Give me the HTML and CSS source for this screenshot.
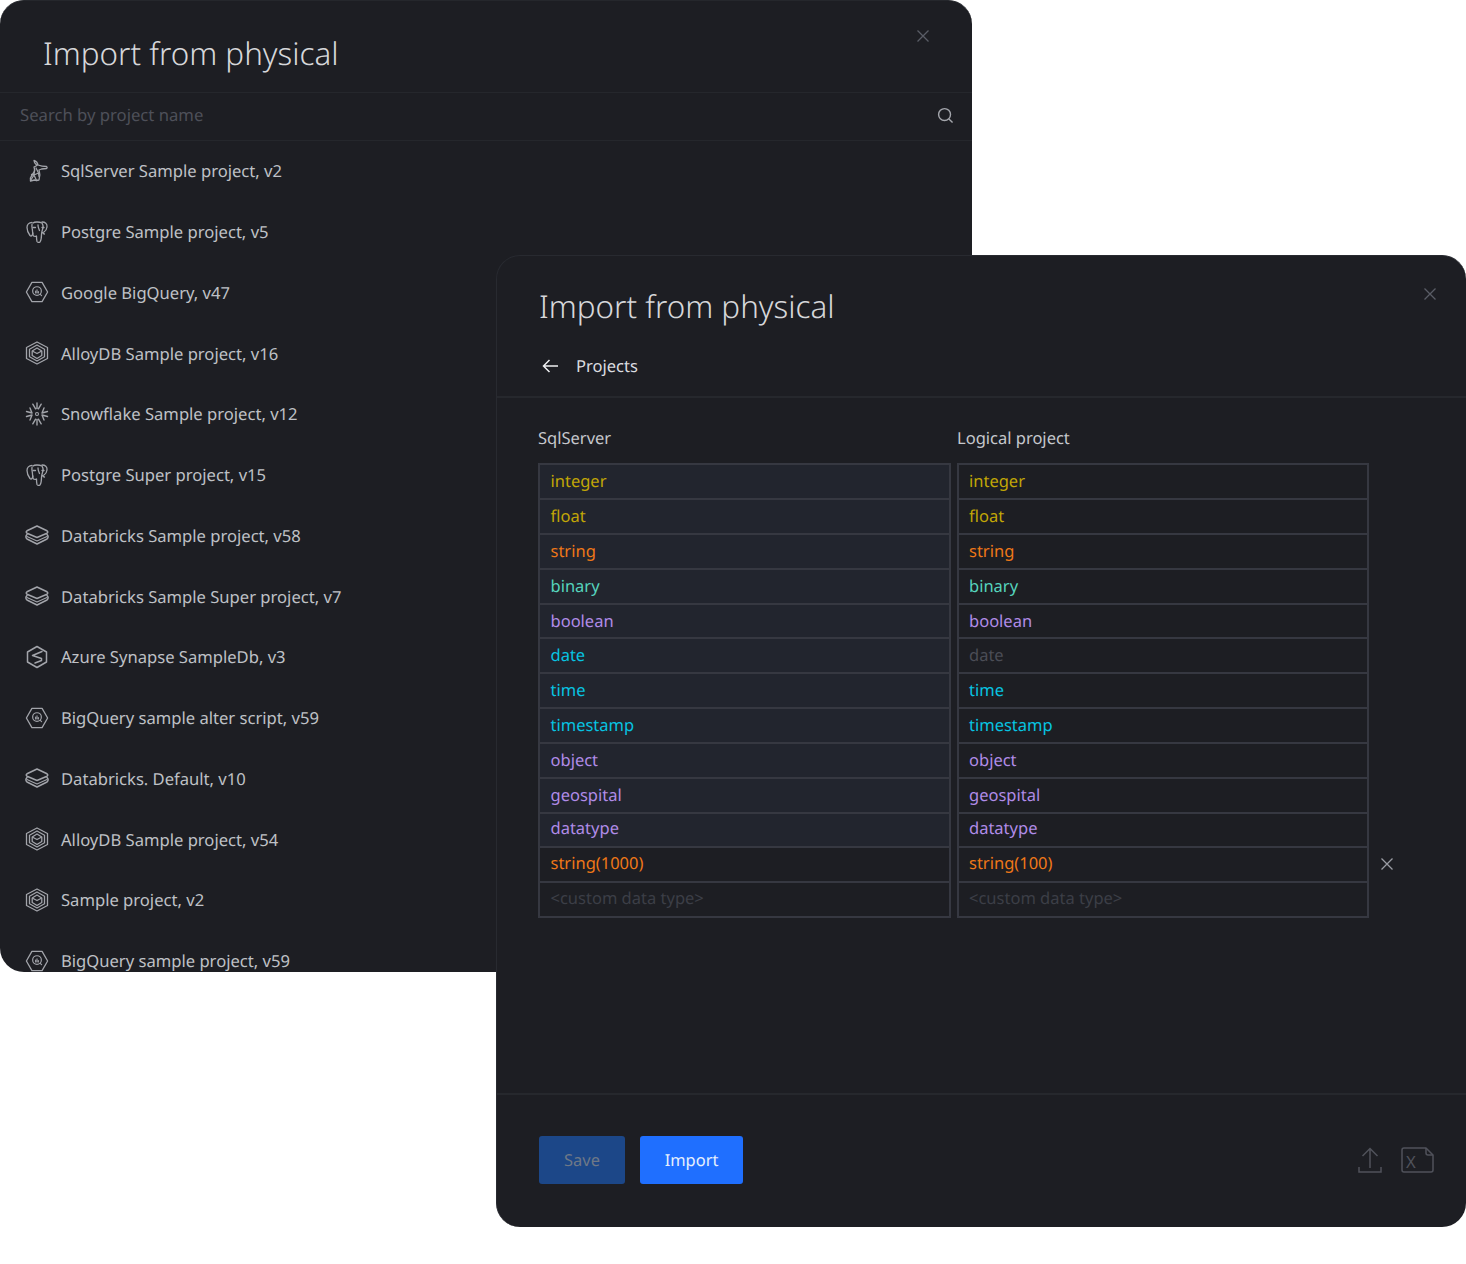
FILE: index.html
```html
<!DOCTYPE html>
<html lang="en">
<head>
<meta charset="utf-8">
<title>Import from physical</title>
<link rel="stylesheet" href="styles.css">
</head>
<body>
<svg class="defs" aria-hidden="true">
  <symbol id="i-sql" viewBox="0 0 24 24"><g fill="none" stroke="currentColor" stroke-width="1.300" stroke-linejoin="round" stroke-linecap="round"><path d="M9 1.500c2 .5 3.500 2 4 4.500 2.500 1 5 1.500 8.500 1.500.8.500.8 1.500 0 2l-5 .5-2.500 1c.5 2.500 1.500 5 .5 7l-.5 3-2.500.5-2-.5-4 1c-.5-2 0-4 1.500-6l2.500-3.500c.5-1.500 0-3-.5-4.500l3-1.500C11 5.500 9 4 9 1.500Z"/><path d="M11 9l2.500 5-4.500 2 2.500 5.500M6.500 15.500 9 16l-3.500 5.500M9.500 10.500l-.5 5.500M13.500 14l.5 3.500"/></g></symbol>
  <symbol id="i-pg" viewBox="0 0 24 24"><g fill="none" stroke="currentColor" stroke-width="1.300" stroke-linejoin="round" stroke-linecap="round"><path d="M7 2.500C4 2.500 2 4.500 2 7.500c0 3 1.500 6 3 8 1 1 2 .5 2.500-1l.5-1.500"/><path d="M17 2c3 0 5.500 1.500 5 5-.3 2.500-1.500 4-3 5l-1.500.5c.5 1 1 1.500 2 1.500"/><path d="M8 3c1-1 2.500-1 4-1s3 0 5 1c1 1.500 1.500 4 .5 6.500-.5 1.500-1 3-1 5 0 3-.5 6-1.500 7.500-1 .8-2.500.5-3-.5-.5-1.500-.5-3.500-.5-5.500-1 .5-2 .5-3 0-1-1-1-3-1-5 0-2-1-4-.5-6.500"/><path d="M13 5c0 3 1 4 1.500 5.500M8 7.500h2.500M17 7.500h2"/></g></symbol>
  <symbol id="i-bq" viewBox="0 0 26 24"><g fill="none" stroke="currentColor" stroke-linejoin="round" stroke-linecap="round"><path stroke-width="1.400" d="M7.500 1.500h11L24.500 12l-6 10.500h-11L1.500 12Z"/><circle cx="13" cy="11" r="4.700" stroke-width="1.300"/><path stroke-width="1.200" d="M16.500 14.500l1.500 1.500M11.500 13v-2M13 13V9.500M14.500 13v-1.500"/></g></symbol>
  <symbol id="i-alloy" viewBox="0 0 24 24"><g fill="none" stroke="currentColor" stroke-width="1.300" stroke-linejoin="round"><path d="M12 1 22.500 6.500v11L12 23 1.500 17.500v-11Z"/><path d="M12 4 19.500 8.200v7.600L12 20 4.500 15.800V8.200Z"/><path d="M12 7 16.800 10v4.500L12 17.500 7.200 14.500V10Z"/><path d="M7.200 10 12 12.500 16.800 10"/></g></symbol>
  <symbol id="i-snow" viewBox="0 0 24 24"><g fill="none" stroke="currentColor" stroke-width="1.400" stroke-linecap="round" stroke-linejoin="round"><path d="M12 1V6.500M7.800 2.200 10.600 6.800M16.200 2.200 13.400 6.800"/><path d="M1.500 9.500 7 11 5 6M22.500 9.500 17 11 19 6M1.500 14.500 7 13 5 18M22.500 14.500 17 13 19 18"/><path d="M12 23V17.500M7.800 21.800 10.600 17.200M16.200 21.800 13.400 17.200"/><circle cx="12" cy="12" r="1.500" stroke-width="1.100"/></g></symbol>
  <symbol id="i-brick" viewBox="0 0 24 20"><g fill="none" stroke="currentColor" stroke-width="1.500" stroke-linejoin="round" stroke-linecap="round"><path d="M12 1 22 5.800c1 .7 1 1.700 0 2.400L12 12.500 2 8.200c-1-.7-1-1.700 0-2.400Z"/><path d="M2 9.500C.5 11 .5 12.500 2 14L12 19l10-5c1.500-1.500 1.500-3 0-4.500"/><path d="M2 11.500 12 16l10-4.500" stroke-width="1.100"/></g></symbol>
  <symbol id="i-syn" viewBox="0 0 24 24"><g fill="none" stroke="currentColor" stroke-width="1.500" stroke-linejoin="round" stroke-linecap="round"><path d="M12 1.500 21.500 7v10L12 22.500 2.500 17V7Z"/><path d="M17 6.500 7.500 10.500 16.500 13.500 16.500 15.500 10 18"/></g></symbol>
  <symbol id="i-close" viewBox="0 0 14 14"><path fill="none" stroke="currentColor" stroke-width="1.300" d="M1.500 1.500l11 11M12.500 1.500l-11 11"/></symbol>
</svg>

<main class="stage">
  <section class="window window-back">
    <header class="back-head">
      <h1 class="title">Import from physical</h1>
      <svg class="close close-back"><use href="#i-close"/></svg>
    </header>
    <div class="search">
      <span class="search-ph">Search by project name</span>
      <svg class="search-icon" viewBox="0 0 18 18"><circle cx="8" cy="8" r="6.300" fill="none" stroke="currentColor" stroke-width="1.500"/><path d="M12.600 12.600 16.500 16.500" fill="none" stroke="currentColor" stroke-width="1.500"/></svg>
    </div>
    <ul class="projects">
      <li class="project"><svg class="picon"><use href="#i-sql"/></svg><span>SqlServer Sample project, v2</span></li>
      <li class="project"><svg class="picon"><use href="#i-pg"/></svg><span>Postgre Sample project, v5</span></li>
      <li class="project"><svg class="picon"><use href="#i-bq"/></svg><span>Google BigQuery, v47</span></li>
      <li class="project"><svg class="picon"><use href="#i-alloy"/></svg><span>AlloyDB Sample project, v16</span></li>
      <li class="project"><svg class="picon"><use href="#i-snow"/></svg><span>Snowflake Sample project, v12</span></li>
      <li class="project"><svg class="picon"><use href="#i-pg"/></svg><span>Postgre Super project, v15</span></li>
      <li class="project"><svg class="picon"><use href="#i-brick"/></svg><span>Databricks Sample project, v58</span></li>
      <li class="project"><svg class="picon"><use href="#i-brick"/></svg><span>Databricks Sample Super project, v7</span></li>
      <li class="project"><svg class="picon"><use href="#i-syn"/></svg><span>Azure Synapse SampleDb, v3</span></li>
      <li class="project"><svg class="picon"><use href="#i-bq"/></svg><span>BigQuery sample alter script, v59</span></li>
      <li class="project"><svg class="picon"><use href="#i-brick"/></svg><span>Databricks. Default, v10</span></li>
      <li class="project"><svg class="picon"><use href="#i-alloy"/></svg><span>AlloyDB Sample project, v54</span></li>
      <li class="project"><svg class="picon"><use href="#i-alloy"/></svg><span>Sample project, v2</span></li>
      <li class="project"><svg class="picon"><use href="#i-bq"/></svg><span>BigQuery sample project, v59</span></li>
    </ul>
  </section>

  <section class="window window-front">
    <header class="front-head">
      <h1 class="title">Import from physical</h1>
      <svg class="close close-front"><use href="#i-close"/></svg>
      <div class="crumb">
        <svg class="arrow" viewBox="0 0 16 14"><path fill="none" stroke="currentColor" stroke-width="1.500" d="M16 7H1.500M7.500 1 1.500 7l6 6"/></svg>
        <span>Projects</span>
      </div>
    </header>
    <div class="mapping">
      <div class="col col-source">
        <div class="col-label">SqlServer</div>
        <div class="cells">
          <div class="cell t-yellow">integer</div>
          <div class="cell t-yellow">float</div>
          <div class="cell t-orange">string</div>
          <div class="cell t-teal">binary</div>
          <div class="cell t-purple">boolean</div>
          <div class="cell t-cyan">date</div>
          <div class="cell t-cyan">time</div>
          <div class="cell t-cyan">timestamp</div>
          <div class="cell t-purple">object</div>
          <div class="cell t-purple">geospital</div>
          <div class="cell t-purple">datatype</div>
          <div class="cell plain t-orange">string(1000)</div>
          <div class="cell plain t-muted">&lt;custom data type&gt;</div>
        </div>
      </div>
      <div class="col">
        <div class="col-label">Logical project</div>
        <div class="cells">
          <div class="cell plain t-yellow">integer</div>
          <div class="cell plain t-yellow">float</div>
          <div class="cell plain t-orange">string</div>
          <div class="cell plain t-teal">binary</div>
          <div class="cell plain t-purple">boolean</div>
          <div class="cell plain t-muted2">date</div>
          <div class="cell plain t-cyan">time</div>
          <div class="cell plain t-cyan">timestamp</div>
          <div class="cell plain t-purple">object</div>
          <div class="cell plain t-purple">geospital</div>
          <div class="cell plain t-purple">datatype</div>
          <div class="cell plain t-orange">string(100)</div>
          <div class="cell plain t-muted">&lt;custom data type&gt;</div>
        </div>
        <svg class="close close-row"><use href="#i-close"/></svg>
      </div>
    </div>
    <footer class="foot">
      <button class="btn btn-save" type="button">Save</button>
      <button class="btn btn-import" type="button">Import</button>
      <div class="foot-icons">
        <svg class="upload" viewBox="0 0 24 26"><path fill="none" stroke="currentColor" stroke-width="1.500" d="M12 21V2M4.500 9 12 1.500 19.500 9M1 20v5h22v-5"/></svg>
        <span class="xfile"><svg class="xfile-shape" viewBox="0 0 33 26"><path fill="none" stroke="currentColor" stroke-width="1.500" stroke-linejoin="round" d="M3 1h22l7 7v15a2 2 0 0 1-2 2H3a2 2 0 0 1-2-2V3a2 2 0 0 1 2-2Z"/><path fill="none" stroke="currentColor" stroke-width="1.500" d="M25 1v5a2 2 0 0 0 2 2h5"/></svg><span class="xfile-x">X</span></span>
      </div>
    </footer>
  </section>
</main>
</body>
</html>
```
FILE: styles.css
```css
* { box-sizing: border-box; }
html, body { margin: 0; padding: 0; background: #fff; }
body { font-family: "Noto Sans", "Open Sans", sans-serif; font-size: 16px; color: #c6c8cd; text-rendering: geometricPrecision; }
.defs { position: absolute; width: 0; height: 0; overflow: hidden; }
.stage { position: relative; width: 1466px; height: 1264px; overflow: hidden; }
.window { position: absolute; background: #1d1e23; border-radius: 24px; overflow: hidden; }
.window-back { left: 0; top: 0; width: 972px; height: 972px; border-top: 1px solid #25272c; }
.window-front { left: 496px; top: 255px; width: 970px; height: 972px; border: 1px solid #282a30; border-width: 1px 0 0 1px; display: flex; flex-direction: column; }
.title { margin: 0; font-size: 31.36px; line-height: 44px; font-weight: 300; color: #d6d7da; }
.close { position: absolute; width: 14px; height: 14px; color: #5a5d66; }
.back-head { height: 92px; padding: 31px 0 0 43px; border-bottom: 1px solid #25272c; }
.close-back { left: 915.500px; top: 28px; }
.search { height: 48px; display: flex; align-items: center; justify-content: space-between; padding: 0 18px 3px 20px; border-bottom: 1px solid #25272c; }
.search-ph { color: #4e5059; font-size: 16.660px; margin-top: -1px; }
.search-icon { width: 17px; height: 17px; color: #a4a6ac; }
.projects { list-style: none; margin: -0.6px 0 0; padding: 0; }
.project { height: 60.77px; display: flex; align-items: center; padding-left: 25px; font-size: 16.600px; color: #bfc1c6; }
.picon { width: 24px; height: 24px; margin-right: 12px; color: #a2a4aa; flex: none; }
.front-head { height: 142px; padding: 29px 0 0 42px; border-bottom: 2px solid #26282d; flex: none; }
.close-front { left: 926px; top: 31px; }
.crumb { display: flex; align-items: center; margin-top: 20px; height: 32px; color: #dcdde0; font-size: 16.550px; }
.arrow { width: 16px; height: 14px; margin: 2px 18px 0 3px; color: #eeeff1; }
.mapping { flex: 1; display: flex; gap: 6px; padding: 27px 0 0 41px; }
.col { position: relative; width: 412px; }
.col-source { width: 413px; }
.col-source .cell { padding-left: 10.500px; }
.col-label { font-size: 16.500px; line-height: 26px; height: 38px; color: #c6c8cd; }
.cells { border: 2px solid #363841; border-width: 1px 2px 2px 2px; }
.cell { height: 34.85px; line-height: 31px; padding-left: 10px; font-size: 16.500px; background: #22252e; border-top: 2px solid #363841; }
.cell:first-child { border-top-width: 1px; height: 34px; line-height: 32px; }
.cell:nth-child(11) { line-height: 28px; }
.cell:nth-child(n+12) { line-height: 29px; }
.cell.plain { background: #1d1e23; }
.t-yellow { color: #c2a706; }
.t-orange { color: #f07818; }
.t-teal { color: #56d4bd; }
.t-purple { color: #b18ce8; }
.t-cyan { color: #07c4e2; }
.t-muted { color: #3c3e47; }
.t-muted2 { color: #4b4d56; }
.close-row { left: 423px; top: 432px; color: #9a9ca3; }
.foot { height: 134px; flex: none; border-top: 2px solid #26282d; display: flex; align-items: flex-start; padding: 41px 32px 0 42px; gap: 15px; }
.btn { font-family: inherit; font-size: 16.450px; height: 48px; padding: 0 0 2px; border: 0; border-radius: 3px; text-rendering: geometricPrecision; }
.btn-save { width: 86px; background: #1c4788; color: #6e7887; }
.btn-import { width: 103px; background: #1f6fff; color: #e6effc; }
.foot-icons { margin-left: auto; display: flex; align-items: center; gap: 19px; color: #50525b; height: 48px; }
.upload { width: 24px; height: 26px; }
.xfile { position: relative; width: 33px; height: 26px; display: block; }
.xfile-shape { width: 33px; height: 26px; display: block; }
.xfile-x { position: absolute; left: 5px; top: 4px; font-size: 16.660px; line-height: 22px; color: #50525b; }
```
